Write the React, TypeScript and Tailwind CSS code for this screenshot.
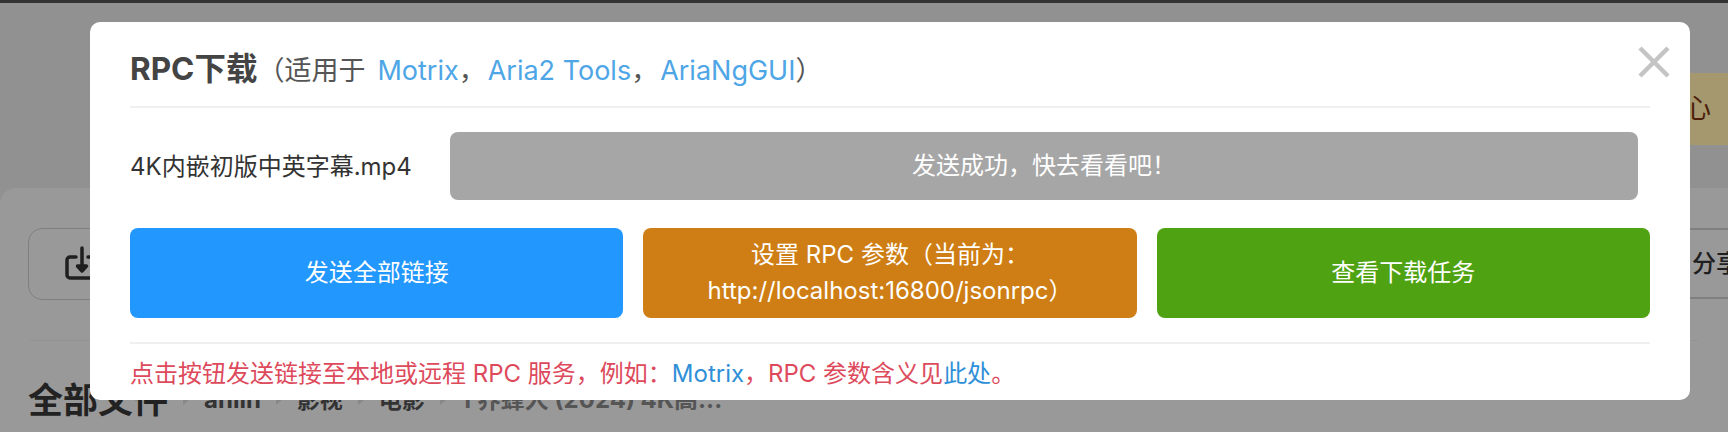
const cjk = "font-['Inter','Noto_Sans_CJK_SC',sans-serif]"

function Chevron() {
  return <span className="w-0 h-0 border-y-[5px] border-y-transparent border-l-[6px] border-l-[#888888]" />
}

function Backdrop() {
  return (
    <div className="h-[432px] bg-[#919191]">
      <div className="h-[3px] bg-[#333333]" />
      <div className="mt-[70px] ml-[1690px] h-[72px] bg-[#a5986f] pt-[18px] text-[27px] leading-[36px] text-[#4d1f0a]">
        <span className="block -ml-[6px]">心</span>
      </div>
      <div className="mt-[43px] h-[244px] rounded-tl-[16px] bg-[#999999] pt-[40px]">
        <div className="flex justify-between h-[71px] pl-[28px]">
          <div className="w-[300px] h-[72px] rounded-[14px] border border-[#7f7f7f] pl-[36px] pt-[17px]">
            <svg width="34" height="36" viewBox="0 0 34 36" fill="none" stroke="#1f1f1f" strokeWidth="3.5" strokeLinecap="round" strokeLinejoin="round">
              <path d="M11 11H5a3 3 0 0 0-3 3v15a3 3 0 0 0 3 3h24a3 3 0 0 0 3-3V14a3 3 0 0 0-3-3h-6" />
              <path d="M17 2v20" />
              <path d="M12.5 20l4.500 5 4.500-5z" fill="#1f1f1f" />
            </svg>
          </div>
          <div className="w-[38px] border-y-2 border-[#7f7f7f] pl-[2px] text-[24px] leading-[67px] font-medium text-[#1f1f1f] whitespace-nowrap overflow-hidden">
            分享
          </div>
        </div>
        <div className="mt-[41px] mx-[30px] border-t border-[#939393]" />
        <div className="mt-[37px] pl-[28px] flex items-center gap-[15px] h-[44px] whitespace-nowrap">
          <span className="text-[35px] font-bold text-[#222222]">全部文件</span>
          <Chevron />
          <span className="text-[24px] font-bold text-[#333333]">anlin</span>
          <Chevron />
          <span className="text-[23px] font-bold text-[#333333]">影视</span>
          <Chevron />
          <span className="text-[23px] font-bold text-[#333333]">电影</span>
          <Chevron />
          <span className="text-[24px] font-bold text-[#555555]">1 养蜂人 (2024) 4K高...</span>
        </div>
      </div>
    </div>
  )
}

export default function App() {
  return (
    <div className={`relative w-[1728px] h-[432px] overflow-hidden ${cjk}`}>
      <Backdrop />

      <div className="absolute left-[90px] top-[22px] w-[1600px] h-[378px] rounded-[10px] bg-white px-[40px]">
        <button className="absolute right-[20px] top-[24px] text-[#c4c4c4]">
          <svg width="32" height="32" viewBox="0 0 32 32" stroke="currentColor" strokeWidth="4.5">
            <path d="M2 2l28 28M30 2L2 30" />
          </svg>
        </button>

        <div className="h-[86px] pt-[27px] border-b-2 border-[#f0f0f0] flex items-baseline text-[27px] leading-[40px] text-[#555555] whitespace-nowrap">
          <span className="text-[31.5px] font-bold text-[#444444]">RPC下载</span>
          <span className="mr-[12px]">（适用于</span>
          <span className="text-[#4ea6e6]">Motrix</span>
          <span className="mr-[2px]">，</span>
          <span className="text-[#4ea6e6]">Aria2 Tools</span>
          <span className="mr-[2px]">，</span>
          <span className="text-[#4ea6e6]">AriaNgGUI</span>
          <span>）</span>
        </div>

        <div className="flex items-center mt-[24px] h-[68px]">
          <div className="w-[320px] pt-[2px] text-[24px] text-[#333333] whitespace-nowrap">4K内嵌初版中英字幕.mp4</div>
          <div className="w-[1188px] h-[68px] rounded-[8px] bg-[#a6a6a6] flex items-center justify-center text-[24px] text-white">
            发送成功，快去看看吧！
          </div>
        </div>

        <div className="grid grid-cols-3 gap-[20px] mt-[28px] text-[24px] leading-[36px] text-white text-center">
          <button className="h-[90px] rounded-[8px] bg-[#2298fe]">发送全部链接</button>
          <button className="h-[90px] rounded-[8px] bg-[#ce7e14]">
            设置 RPC 参数（当前为：
            <br />
            http://localhost:16800/jsonrpc）
          </button>
          <button className="h-[90px] rounded-[8px] bg-[#4fa312]">查看下载任务</button>
        </div>

        <div className="mt-[24px] border-t-2 border-[#f0f0f0] pt-[12px] text-[24px] leading-[36px] text-[#dd4a5c] whitespace-nowrap">
          点击按钮发送链接至本地或远程 RPC 服务，例如：<span className="text-[#2f8fd8]">Motrix</span>，RPC 参数含义见<span className="text-[#2f8fd8]">此处</span>。
        </div>
      </div>
    </div>
  )
}
